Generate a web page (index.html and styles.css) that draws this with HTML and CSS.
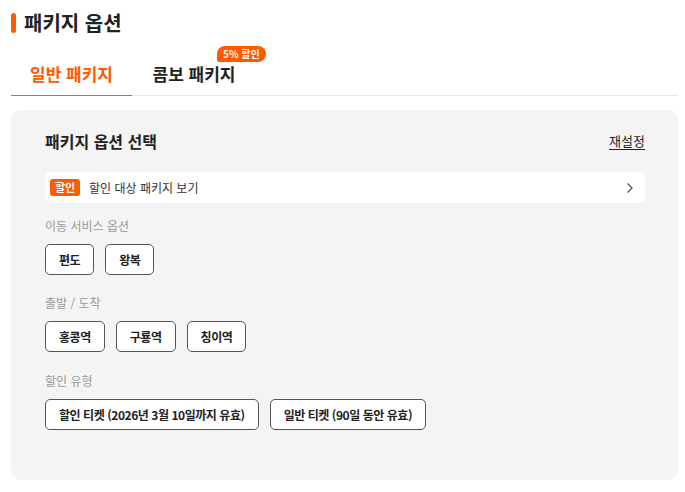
FILE: index.html
```html
<!DOCTYPE html>
<html lang="ko">
<head>
<meta charset="utf-8">
<link rel="stylesheet" href="styles.css">
</head>
<body>
<div class="page">
  <h1 class="title"><span class="title-bar"></span>패키지 옵션</h1>
  <div class="tabs">
    <div class="tab active">일반 패키지</div>
    <div class="tab">콤보 패키지<span class="tab-badge">5% 할인</span></div>
  </div>
  <div class="panel">
    <div class="panel-head">
      <h2 class="panel-title">패키지 옵션 선택</h2>
      <a class="reset">재설정</a>
    </div>
    <div class="promo">
      <span class="promo-badge">할인</span>
      <span class="promo-text">할인 대상 패키지 보기</span>
      <svg class="chev" width="8" height="12" viewBox="0 0 8 12"><path d="M1.5 1.5 L6 6 L1.5 10.5" fill="none" stroke="#555" stroke-width="1.3"/></svg>
    </div>
    <div class="group">
      <div class="label">이동 서비스 옵션</div>
      <div class="opts">
        <button class="opt">편도</button>
        <button class="opt">왕복</button>
      </div>
    </div>
    <div class="group">
      <div class="label">출발 / 도착</div>
      <div class="opts">
        <button class="opt">홍콩역</button>
        <button class="opt">구룡역</button>
        <button class="opt">칭이역</button>
      </div>
    </div>
    <div class="group">
      <div class="label">할인 유형</div>
      <div class="opts">
        <button class="opt">할인 티켓 (2026년 3월 10일까지 유효)</button>
        <button class="opt">일반 티켓 (90일 동안 유효)</button>
      </div>
    </div>
  </div>
</div>
</body>
</html>
```
FILE: styles.css
```css
* { box-sizing: border-box; }
body {
  margin: 0;
  font-family: "Noto Sans CJK KR", "Noto Sans", sans-serif;
  color: #222;
  background: #fff;
}
.page {
  padding: 0 7px 0 11px;
}
.title {
  margin: 0;
  padding-top: 9px;
  height: 36px;
  display: flex;
  align-items: center;
  font-size: 20px;
  font-weight: 700;
  line-height: 28px;
  color: #222;
}
.title-bar {
  width: 5px;
  height: 20px;
  background: #ff5a00;
  border-radius: 3px;
  margin-right: 8px;
}
.tabs {
  display: flex;
  margin-top: 18px;
  border-bottom: 1px solid #e6e6e6;
}
.tab {
  position: relative;
  width: 121px;
  text-align: center;
  font-size: 17px;
  font-weight: 700;
  line-height: 24px;
  padding: 8px 0 9px;
  color: #222;
  margin-bottom: -1px;
  border-bottom: 1px solid transparent;
}
.tab + .tab { width: 124px; }
.tab.active {
  color: #ff5a00;
  border-bottom-color: #ff5a00;
}
.tab-badge {
  position: absolute;
  left: 85px;
  top: -8px;
  white-space: nowrap;
  background: #ff5a00;
  color: #fff;
  font-size: 10px;
  font-weight: 700;
  line-height: 16px;
  padding: 0 6px;
  border-radius: 8px 8px 8px 2px;
}
.panel {
  margin-top: 14px;
  background: #f4f4f4;
  border-radius: 10px;
  padding: 20px 33px 50px 34px;
  height: 370px;
}
.panel-head {
  display: flex;
  justify-content: space-between;
  align-items: center;
}
.panel-title {
  margin: 0;
  font-size: 16px;
  font-weight: 700;
  line-height: 22px;
  color: #222;
}
.reset {
  font-size: 13px;
  color: #222;
  text-decoration: underline;
  text-underline-offset: 3px;
  line-height: 20px;
}
.promo {
  margin-top: 20px;
  background: #fff;
  border-radius: 6px;
  height: 31px;
  display: flex;
  align-items: center;
  padding: 0 11px 0 5px;
}
.promo-badge {
  background: #ff5a00;
  color: #fff;
  font-size: 11px;
  font-weight: 700;
  width: 30px;
  height: 17px;
  line-height: 17px;
  text-align: center;
  border-radius: 3px;
}
.promo-text {
  margin-left: 9px;
  font-size: 12px;
  color: #333;
  flex: 1;
}
.chev { display: block; }
.group { margin-top: 14px; }
.label {
  font-size: 12px;
  color: #999;
  line-height: 18px;
}
.opts {
  display: flex;
  gap: 11px;
  margin-top: 9px;
}
.opt {
  font-family: inherit;
  background: #fff;
  border: 1px solid #555;
  border-radius: 5px;
  height: 31px;
  padding: 0 13px;
  font-size: 12px;
  font-weight: 700;
  letter-spacing: -0.45px;
  color: #222;
}
.group + .group { margin-top: 19px; }
.group:last-child { margin-top: 20px; }
```
